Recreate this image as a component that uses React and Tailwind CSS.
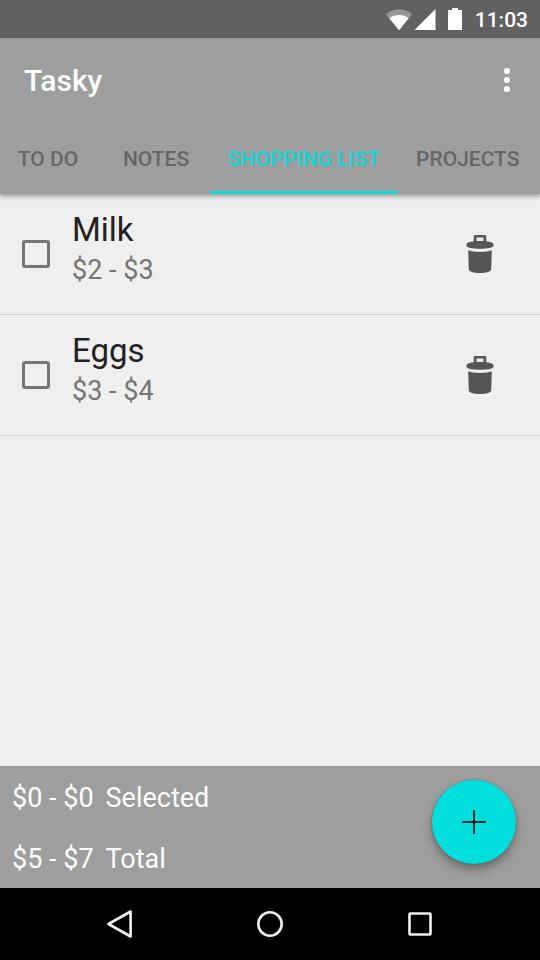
import { useState } from "react";
import clsx from "clsx";

const tabs = ["TO DO", "NOTES", "SHOPPING LIST", "PROJECTS"];

const items = [
  { id: "milk", name: "Milk", low: 2, high: 3 },
  { id: "eggs", name: "Eggs", low: 3, high: 4 },
];

const sum = (list, key) => list.reduce((total, item) => total + item[key], 0);

function StatusBar() {
  return (
    <div className="relative z-10 flex h-[38px] items-center justify-end bg-[#616161] pt-0.5 pr-3 text-white">
      <svg className="h-6 w-7" viewBox="0 0 28 24" fill="currentColor" aria-hidden="true">
        <path d="M14 22.3 1 6.2C4.6 3 9 1.6 14 1.6S23.4 3 27 6.2Z" opacity="0.35" />
        <path d="M14 22.3 4.300 10.2C7 8 10.3 7 14 7s7 1 9.700 3.200Z" />
      </svg>
      <svg className="h-6 w-6" viewBox="0 0 24 24" fill="currentColor" aria-hidden="true">
        <path d="M22.500 1v21H1.500Z" />
      </svg>
      <svg className="ml-1.5 h-6 w-6" viewBox="0 0 24 24" fill="currentColor" aria-hidden="true">
        <path d="M9 0h6v2h3.500a.5.5 0 0 1 .5.5v19a.5.5 0 0 1-.5.5h-13a.5.5 0 0 1-.5-.5v-19a.5.5 0 0 1 .5-.5H9Z" />
      </svg>
      <span className="ml-2 text-[21px] leading-6 font-medium">11:03</span>
    </div>
  );
}

function AppBar({ active, onSelect }) {
  return (
    <header className="relative bg-[#9e9e9e] shadow-[0_2px_5px_rgba(0,0,0,0.4)]">
      <div className="flex h-[84px] items-center justify-between pl-6">
        <h1 className="pt-0.5 text-[30px] leading-9 font-medium text-white">Tasky</h1>
        <button type="button" aria-label="More options" className="flex h-12 w-[66px] items-center justify-center text-white">
          <svg className="h-7 w-7" viewBox="0 0 28 28" fill="currentColor" aria-hidden="true">
            <circle cx="14" cy="5" r="3.100" />
            <circle cx="14" cy="14" r="3.100" />
            <circle cx="14" cy="23" r="3.100" />
          </svg>
        </button>
      </div>
      <nav className="overflow-hidden">
        <div className="-ml-1.5 flex h-[72px]">
          {tabs.map((tab) => (
            <button
              key={tab}
              type="button"
              onClick={() => onSelect(tab)}
              className={clsx(
                "min-w-[108px] shrink-0 border-b-3 px-[18px] pt-1 text-[21px] leading-6 font-medium whitespace-nowrap",
                tab === active
                  ? "border-b-[#10d6d6] text-[#10d6d6]"
                  : "border-b-transparent text-[#666666]"
              )}
            >
              {tab}
            </button>
          ))}
        </div>
      </nav>
    </header>
  );
}

function TrashIcon() {
  return (
    <svg className="h-10 w-7" viewBox="0 0 28 40" fill="#555555" aria-hidden="true">
      <path
        fillRule="evenodd"
        d="M9.200 1h9.600a1.500 1.500 0 0 1 1.500 1.500v4.800C25 7.900 27.500 9 27.500 10.600v.8C27.500 13.600 22 14.700 14 14.700S.5 13.600.5 11.400v-.8C.5 9 3 7.900 7.700 7.300V2.500A1.500 1.500 0 0 1 9.200 1Zm1.300 2.600v3.500h7V3.600Z"
      />
      <path d="M2.200 16.200c3 1.200 7 1.700 11.800 1.700s8.800-.5 11.800-1.700L25.200 35.500c-.2 2.300-4.400 3.500-11.200 3.500s-11-1.200-11.200-3.500Z" />
    </svg>
  );
}

function ItemRow({ item, checked, onToggle }) {
  return (
    <li className="flex items-center border-b border-[#d0d0d0] pr-[46px] pl-[22px]">
      <input
        id={item.id}
        type="checkbox"
        checked={checked}
        onChange={() => onToggle(item.id)}
        className="h-7 w-7 shrink-0 appearance-none rounded-[3px] border-3 border-[#757575] checked:border-[#10d6d6] checked:bg-[#10d6d6]"
      />
      <label htmlFor={item.id} className="flex flex-1 flex-col pt-[14px] pb-[26px] pl-[22px]">
        <span className="text-[33px] leading-[44px] text-[#212121]">{item.name}</span>
        <span className="text-[27px] leading-9 text-[#757575]">{`$${item.low} - $${item.high}`}</span>
      </label>
      <button type="button" aria-label={`Delete ${item.name}`}>
        <TrashIcon />
      </button>
    </li>
  );
}

function TotalLine({ list, label }) {
  return (
    <p className="flex gap-3">
      <span>{`$${sum(list, "low")} - $${sum(list, "high")}`}</span>
      <span>{label}</span>
    </p>
  );
}

function NavBar() {
  return (
    <nav className="flex h-[72px] bg-black px-[45px] text-[#eeeeee]">
      <button type="button" aria-label="Back" className="flex flex-1 items-center justify-center">
        <svg className="h-8 w-8" viewBox="0 0 32 32" fill="none" stroke="currentColor" strokeWidth="2.600" strokeLinejoin="round">
          <path d="M26.600 3.500v25L4.500 16Z" />
        </svg>
      </button>
      <button type="button" aria-label="Home" className="flex flex-1 items-center justify-center">
        <svg className="h-8 w-8" viewBox="0 0 32 32" fill="none" stroke="currentColor" strokeWidth="2.600">
          <circle cx="16" cy="16" r="11.700" />
        </svg>
      </button>
      <button type="button" aria-label="Recent apps" className="flex flex-1 items-center justify-center">
        <svg className="h-8 w-8" viewBox="0 0 32 32" fill="none" stroke="currentColor" strokeWidth="2.600" strokeLinejoin="round">
          <rect x="5.500" y="5.500" width="21" height="21" rx="0.500" />
        </svg>
      </button>
    </nav>
  );
}

export default function App() {
  const [active, setActive] = useState("SHOPPING LIST");
  const [selected, setSelected] = useState([]);

  const toggle = (id) =>
    setSelected((prev) => (prev.includes(id) ? prev.filter((x) => x !== id) : [...prev, id]));

  return (
    <div className="flex min-h-screen flex-col bg-[#efefef] font-[Roboto,sans-serif]">
      <StatusBar />
      <AppBar active={active} onSelect={setActive} />

      <main className="flex-1">
        <ul>
          {items.map((item) => (
            <ItemRow key={item.id} item={item} checked={selected.includes(item.id)} onToggle={toggle} />
          ))}
        </ul>
      </main>

      <footer className="flex h-[122px] items-start justify-between bg-[#9e9e9e] pr-6 pl-3">
        <div className="pt-0.5 text-[27px] leading-[61px] text-white">
          <TotalLine list={items.filter((item) => selected.includes(item.id))} label="Selected" />
          <TotalLine list={items} label="Total" />
        </div>
        <button
          type="button"
          aria-label="Add item"
          className="mt-[14px] flex h-[84px] w-[84px] items-center justify-center rounded-full bg-[#00dede] shadow-[0_6px_10px_rgba(0,0,0,0.3),0_0_3px_rgba(0,0,0,0.25)]"
        >
          <svg className="h-6 w-6" viewBox="0 0 24 24" fill="none" stroke="#142828" strokeWidth="2" aria-hidden="true">
            <path d="M12 0v24M0 12h24" />
          </svg>
        </button>
      </footer>
      <NavBar />
    </div>
  );
}
